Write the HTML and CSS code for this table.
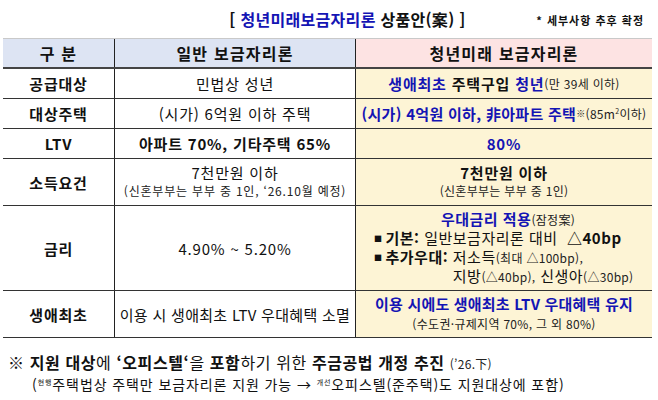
FILE: index.html
```html
<!DOCTYPE html>
<html lang="ko">
<head>
<meta charset="utf-8">
<link rel="stylesheet" href="styles.css">
</head>
<body>
<div class="page">
  <div class="title-row">
    <div class="title"><span>[ </span><span class="blue">청년미래보금자리론</span> 상품안(案) ]</div>
    <div class="note">* 세부사항 추후 확정</div>
  </div>
  <div class="table">
    <div class="row head">
      <div class="c1 hb">구 분</div>
      <div class="c2 hb">일반 보금자리론</div>
      <div class="c3 hp">청년미래 보금자리론</div>
    </div>
    <div class="row r30">
      <div class="c1 lbl">공급대상</div>
      <div class="c2">민법상 성년</div>
      <div class="c3 y"><b class="blue">생애최초</b>&nbsp;<b>주택구입</b>&nbsp;<b class="blue">청년</b><span class="sm">(만 39세 이하)</span></div>
    </div>
    <div class="row r30">
      <div class="c1 lbl">대상주택</div>
      <div class="c2">(시가) 6억원 이하 주택</div>
      <div class="c3 y tight"><b class="blue">(시가) 4억원 이하, 非아파트 주택</b><sup class="sup">※</sup><span class="sm">(85m<sup class="sq">2</sup>이하)</span></div>
    </div>
    <div class="row r30">
      <div class="c1 lbl">LTV</div>
      <div class="c2"><b>아파트 70%, 기타주택 65%</b></div>
      <div class="c3 y"><b class="blue">80%</b></div>
    </div>
    <div class="row r47">
      <div class="c1 lbl">소득요건</div>
      <div class="c2 col"><span>7천만원 이하</span><span class="sm wide">(신혼부부는 부부 중 1인, ‘26.10월 예정)</span></div>
      <div class="c3 y col"><b>7천만원 이하</b><span class="sm">(신혼부부는 부부 중 1인)</span></div>
    </div>
    <div class="row r85">
      <div class="c1 lbl">금리</div>
      <div class="c2">4.90% ~ 5.20%</div>
      <div class="c3 y col rate">
        <div class="rline"><b class="blue">우대금리 적용</b><span class="sm">(잠정案)</span></div>
        <div class="bl"><span class="sq-b">■</span><b>기본:</b>&nbsp;일반보금자리론 대비&nbsp;&nbsp;<b>△40bp</b></div>
        <div class="bl"><span class="sq-b">■</span><b>추가우대:</b>&nbsp;<span class="stack"><span>저소득<span class="sm">(최대 △100bp),</span></span><span>지방<span class="sm">(△40bp),</span> 신생아<span class="sm">(△30bp)</span></span></span></div>
      </div>
    </div>
    <div class="row r47 last">
      <div class="c1 lbl">생애최초</div>
      <div class="c2 tight">이용 시 생애최초 LTV 우대혜택 소멸</div>
      <div class="c3 y col l6"><b class="blue big">이용 시에도 생애최초 LTV 우대혜택 유지</b><span class="sm">(수도권·규제지역 70%, 그 외 80%)</span></div>
    </div>
  </div>
  <div class="foot1">※ <b>지원 대상</b>에 <b>‘오피스텔‘</b>을 <b>포함</b>하기 위한 <b>주금공법 개정 추진</b> <span class="sm">(’26.下)</span></div>
  <div class="foot2">(<sup class="tiny">현행</sup>주택법상 주택만 보금자리론 지원 가능 → <sup class="tiny">개선</sup>오피스텔(준주택)도 지원대상에 포함)</div>
</div>
</body>
</html>
```
FILE: styles.css
```css
* { box-sizing: border-box; }
html, body { margin: 0; padding: 0; background: #fff; }
body {
  font-family: "Noto Sans CJK KR", "Noto Sans", sans-serif;
  color: #111;
  width: 658px;
  height: 400px;
  overflow: hidden;
}
.page { padding: 0 6px 0 3px; }
.title-row {
  position: relative;
  height: 38px;
  display: flex;
  justify-content: center;
  align-items: center;
}
.title {
  font-size: 16px;
  font-weight: 700;
  margin-left: 40px;
  letter-spacing: 0.3px;
}
.blue { color: #1414b4; }
.note {
  position: absolute;
  right: 8px;
  top: 12px;
  font-size: 11px;
  font-weight: 700;
  letter-spacing: 1px;
}
.table {
  border-top: 1px solid #c9c9c9;
}
.row {
  display: grid;
  grid-template-columns: 112px 241px 296px;
  border-bottom: 1px solid #333;
}
.row.head { height: 30px; border-bottom: 2px solid #444; }
.r30 { height: 30px; }
.r47 { height: 47px; }
.r85 { height: 85px; }
.row > div {
  display: flex;
  align-items: center;
  justify-content: center;
  font-size: 15px;
  letter-spacing: 0.8px;
  white-space: nowrap;
}
.row > .tight { letter-spacing: 0.3px; }
.c1 { border-right: 1px solid #222; }
.c2 { border-right: 1px solid #222; }
.hb { background: #dde4f3; font-weight: 700; font-size: 16px !important; letter-spacing: 1.2px !important; }
.hp { background: #fde3e3; font-weight: 700; font-size: 16px !important; letter-spacing: 1.2px !important; }
.y { background: #fdf4d5; }
.lbl { font-weight: 700; }
.col { flex-direction: column; line-height: 18px; }
.sm { font-size: 12px; font-weight: 400; color: #222; letter-spacing: 0.3px; }
.wide { letter-spacing: 0.8px; }
.sup { font-size: 9px; vertical-align: 5px; }
.sq { font-size: 7px; vertical-align: 5px; }
.big { font-size: 15px; letter-spacing: 0.2px; }
.row > .l6 { line-height: 20px; letter-spacing: 0.2px; }
.rate { align-items: flex-start !important; padding-left: 18px; letter-spacing: 0.5px !important; }
.rline { align-self: center; margin-left: -10px; }
.bl { display: flex; align-items: flex-start; }
.sq-b { font-size: 8px; margin-right: 3px; margin-top: 1px; }
.stack { display: flex; flex-direction: column; }
.foot1 {
  margin-top: 12px;
  margin-left: 5px;
  font-size: 16px;
  letter-spacing: 0.6px;
}
.foot2 {
  margin-left: 29px;
  font-size: 14px;
  letter-spacing: 0.9px;
}
.tiny { font-size: 7px; vertical-align: 5px; }
```
